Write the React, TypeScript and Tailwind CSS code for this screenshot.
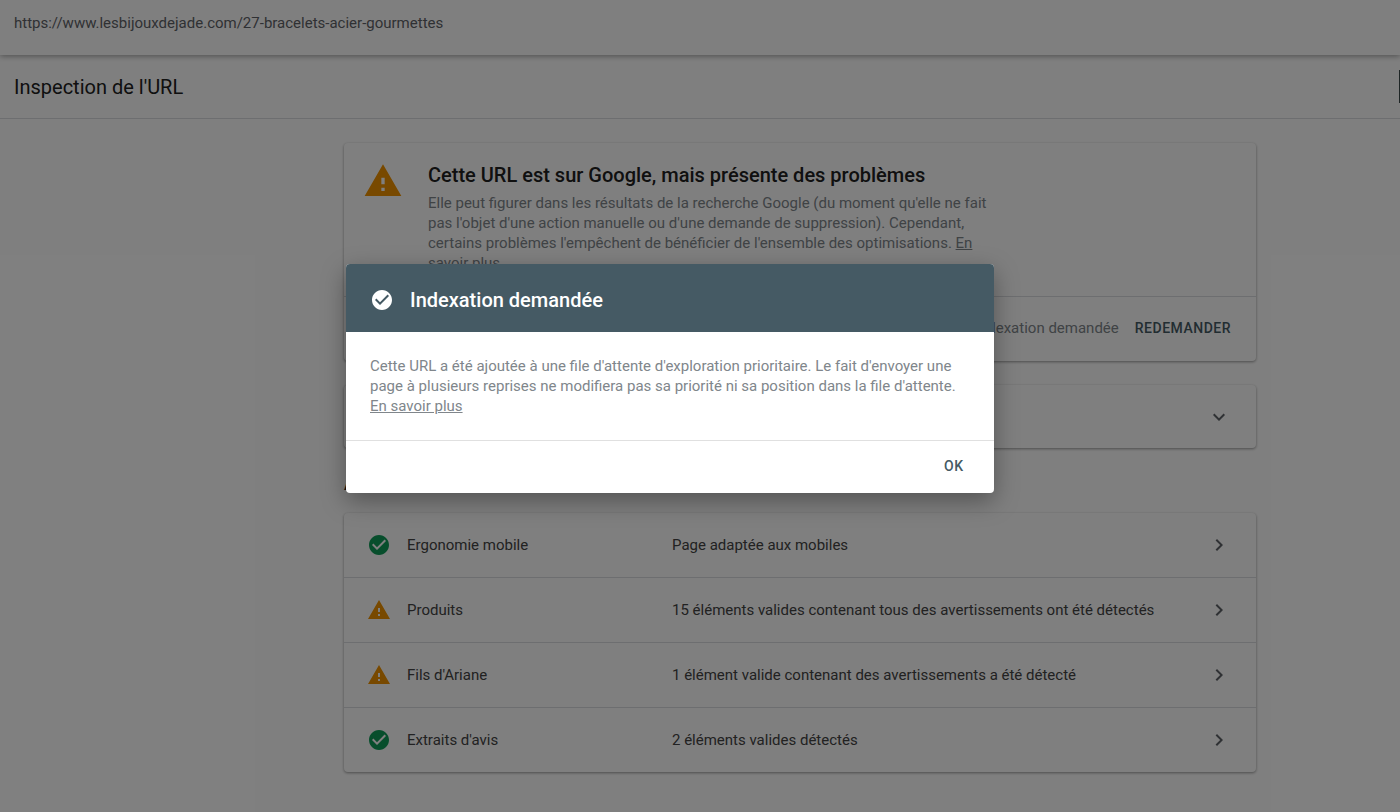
const WARNING = 'M1 21h22L12 2 1 21zm12-3h-2v-2h2v2zm0-4h-2v-4h2v4z';
const CHECK_CIRCLE =
  'M12 2C6.48 2 2 6.48 2 12s4.48 10 10 10 10-4.48 10-10S17.52 2 12 2zm-2 15l-5-5 1.41-1.41L10 14.17l7.59-7.59L19 8l-9 9z';
const CHEVRON_RIGHT = 'M8.59 16.59L13.17 12 8.59 7.41 10 6l6 6-6 6z';
const CHEVRON_DOWN = 'M7.41 8.59L12 13.17l4.59-4.58L18 10l-6 6-6-6z';

function Icon({ d, className }: { d: string; className: string }) {
  return (
    <svg viewBox="0 0 24 24" className={className} fill="currentColor">
      <path d={d} />
    </svg>
  );
}

const rows = [
  { ok: true, name: 'Ergonomie mobile', detail: 'Page adaptée aux mobiles' },
  { ok: false, name: 'Produits', detail: '15 éléments valides contenant tous des avertissements ont été détectés' },
  { ok: false, name: "Fils d'Ariane", detail: '1 élément valide contenant des avertissements a été détecté' },
  { ok: true, name: "Extraits d'avis", detail: '2 éléments valides détectés' },
];

export default function App() {
  return (
    <div className="relative h-[812px] overflow-hidden bg-white font-['Roboto',sans-serif] text-[#212121]">
      {/* URL bar */}
      <div className="relative z-10 flex h-[55px] items-start bg-white pl-[14px] pt-[14px] text-[15px] leading-[18px] text-[#5f6368] shadow-[0_1px_6px_rgba(0,0,0,0.4)]">
        https://www.lesbijouxdejade.com/27-bracelets-acier-gourmettes
      </div>

      {/* Page header */}
      <div className="relative flex h-[64px] items-center border-b border-[#dadce0] pl-[14px] text-[20px] font-normal">
        Inspection de l'URL
        <div className="absolute right-0 top-[15px] h-[33px] w-px bg-[#3c4a4a]" />
      </div>

      <div className="ml-[344px] w-[912px] pt-6">
        {/* Status card */}
        <div className="rounded-sm bg-white shadow-[0_1px_3px_rgba(0,0,0,0.4)]">
          <div className="flex h-[154px] border-b border-[#dadce0] pl-[19px] pt-[18px]">
            <Icon d={WARNING} className="h-10 w-10 text-[#f09300]" />
            <div className="ml-[25px] w-[565px]">
              <h2 className="mb-1 text-[20px] font-medium leading-[28px]">Cette URL est sur Google, mais présente des problèmes</h2>
              <p className="text-[15px] leading-[20px] text-[#80868b]">
                Elle peut figurer dans les résultats de la recherche Google (du moment qu'elle ne fait pas l'objet d'une action manuelle ou d'une demande de suppression). Cependant, certains problèmes l'empêchent de bénéficier de l'ensemble des optimisations. <span className="underline">En savoir plus</span>
              </p>
            </div>
          </div>
          <div className="flex h-[64px] items-center justify-end pb-[2px] pr-[25px] text-[15px]">
            <span className="text-[#80868b]">Indexation demandée</span>
            <span className="ml-4 text-[14px] font-medium tracking-[0.5px] text-[#455a64]">REDEMANDER</span>
          </div>
        </div>

        {/* Collapsed coverage card */}
        <div className="mt-6 flex h-[63px] items-center justify-between rounded-sm bg-white pl-[63px] pr-[25px] text-[15px] shadow-[0_1px_3px_rgba(0,0,0,0.4)]">
          <span>Couverture</span>
          <Icon d={CHEVRON_DOWN} className="h-6 w-6 text-[#5f6368]" />
        </div>

        <div className="mt-[26px] h-[22px] text-[16px] font-medium leading-[22px]">Améliorations</div>

        {/* Enhancements */}
        <div className="mt-[17px] rounded-sm bg-white shadow-[0_1px_3px_rgba(0,0,0,0.4)]">
          {rows.map((row, i) => (
            <div key={row.name} className={`flex items-center pl-[23px] pr-[25px] text-[15px] text-[#444444] ${i > 0 ? 'h-[65px] border-t border-[#dadce0]' : 'h-[64px]'}`}>
              {row.ok ? (
                <Icon d={CHECK_CIRCLE} className="h-6 w-6 text-[#0f9d58]" />
              ) : (
                <Icon d={WARNING} className="h-6 w-6 text-[#f09300]" />
              )}
              <span className="ml-4 w-[265px]">{row.name}</span>
              <span className="flex-1">{row.detail}</span>
              <Icon d={CHEVRON_RIGHT} className="h-6 w-6 text-[#5f6368]" />
            </div>
          ))}
        </div>
      </div>

      {/* Overlay */}
      <div className="absolute inset-0 z-20 bg-black/50" />

      {/* Dialog */}
      <div className="absolute left-[346px] top-[264px] z-30 w-[648px] overflow-hidden rounded-sm bg-white shadow-[0_8px_24px_rgba(0,0,0,0.35)]">
        <div className="flex h-[68px] items-center bg-[#455a64] pl-[24px] text-white">
          <Icon d={CHECK_CIRCLE} className="mt-[3px] h-6 w-6" />
          <span className="ml-[16px] pt-[3px] text-[20px] font-medium">Indexation demandée</span>
        </div>
        <p className="h-[109px] border-b border-[#e0e0e0] px-6 pt-[24px] text-[15px] leading-[20px] text-[#80868b]">
          Cette URL a été ajoutée à une file d'attente d'exploration prioritaire. Le fait d'envoyer une page à plusieurs reprises ne modifiera pas sa priorité ni sa position dans la file d'attente. <span className="underline">En savoir plus</span>
        </p>
        <div className="flex h-[52px] items-center justify-end pb-[2px] pr-[30px] text-[14px] font-medium tracking-[0.8px] text-[#455a64]">OK</div>
      </div>
    </div>
  );
}
